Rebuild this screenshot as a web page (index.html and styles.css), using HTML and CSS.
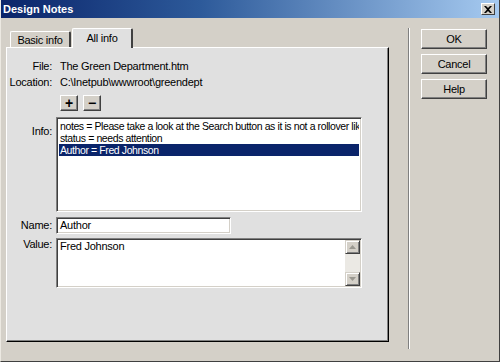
FILE: index.html
```html
<!DOCTYPE html>
<html lang="en">
<head>
  <meta charset="UTF-8">
  <title>Design Notes</title>
  <link rel="stylesheet" href="styles.css">
</head>
<body>
  <div class="window">
    <div class="titlebar">
      <span class="title">Design Notes</span>
      <span class="close-btn">
        <svg width="8" height="7" viewBox="0 0 8 7"><path d="M0 0h2l2 2 2-2h2L5 3.5 8 7H6L4 5 2 7H0l3-3.5z" fill="#000"/></svg>
      </span>
    </div>
    <div class="main">
      <div class="left">
        <div class="tabs">
          <div class="tab">Basic info</div>
          <div class="tab active">All info</div>
        </div>
        <div class="panel">
          <div class="form">
            <div class="label">File:</div>
            <div class="value">The Green Department.htm</div>

            <div class="label">Location:</div>
            <div class="value">C:\Inetpub\wwwroot\greendept</div>

            <div></div>
            <div class="tools">
              <span class="tool-btn">+</span>
              <span class="tool-btn">&minus;</span>
            </div>

            <div class="label label-info">Info:</div>
            <div class="listbox">
              <div class="item">notes = Please take a look at the Search button as it is not a rollover like the others</div>
              <div class="item">status = needs attention</div>
              <div class="item selected">Author = Fred Johnson</div>
            </div>

            <div class="label label-name">Name:</div>
            <div class="textbox">Author</div>

            <div class="label label-value">Value:</div>
            <div class="textarea">
              <div class="textarea-text">Fred Johnson</div>
              <div class="scrollbar">
                <span class="arrow">
                  <svg width="7" height="4" viewBox="0 0 7 4"><path d="M3.5 0L7 4H0z" fill="#9a9890"/></svg>
                </span>
                <span class="track"></span>
                <span class="arrow">
                  <svg width="7" height="4" viewBox="0 0 7 4"><path d="M0 0h7L3.5 4z" fill="#9a9890"/></svg>
                </span>
              </div>
            </div>
          </div>
        </div>
      </div>
      <div class="separator"></div>
      <div class="buttons">
        <div class="btn">OK</div>
        <div class="btn">Cancel</div>
        <div class="btn">Help</div>
      </div>
    </div>
  </div>
</body>
</html>
```

FILE: styles.css
```css
* {
  margin: 0;
  padding: 0;
  box-sizing: border-box;
}
body {
  width: 500px;
  height: 362px;
  overflow: hidden;
  background: #d4d0c8;
  font-family: 'Liberation Sans', Arial, sans-serif;
  font-size: 11px;
  letter-spacing: -0.25px;
  color: #000;
}
.window {
  width: 500px;
  height: 362px;
  background: #d4d0c8;
  border-right: 1px solid #404040;
  border-bottom: 1px solid #404040;
  border-left: 1px solid #ece9e2;
}
.titlebar {
  height: 18px;
  background: linear-gradient(90deg, #0a246a 0%, #2d5a9a 40%, #a6caf0 100%);
  display: flex;
  align-items: center;
  justify-content: space-between;
  padding: 0 4px 0 2px;
}
.title {
  color: #fff;
  font-weight: bold;
  font-size: 11px;
  letter-spacing: 0;
}
.close-btn {
  width: 14px;
  height: 12px;
  background: #d4d0c8;
  border: 1px solid;
  border-color: #fff #404040 #404040 #fff;
  display: flex;
  align-items: center;
  justify-content: center;
}

.main {
  display: flex;
}
.left {
  padding: 10px 0 0 5px;
}
.tabs {
  display: flex;
  align-items: flex-end;
  height: 19px;
  padding-left: 4px;
}
.tab {
  height: 16px;
  width: 61px;
  background: #d4d0c8;
  border: 1px solid #fff;
  border-right: 2px solid #404040;
  border-bottom: none;
  border-radius: 2px 2px 0 0;
  text-align: center;
  line-height: 16px;
}
.tab.active {
  height: 20px;
  width: 61px;
  margin-left: 1px;
  margin-bottom: -1px;
  background: #e0e0e0;
  line-height: 19px;
  position: relative;
  z-index: 1;
}
.panel {
  width: 383px;
  height: 295px;
  background: #e0e0e0;
  border: 1px solid;
  border-color: #fff #000 #000 #fff;
  box-shadow: inset -1px -1px #808080;
  padding: 10px 26px 0 0;
}
.form {
  display: grid;
  grid-template-columns: 45px 1fr;
  column-gap: 4px;
}
.label {
  text-align: right;
  line-height: 16px;
  white-space: nowrap;
}
.value {
  padding-left: 4px;
  line-height: 16px;
  white-space: nowrap;
}
.tools {
  display: flex;
  gap: 5px;
  margin-top: 5px;
  padding-left: 4px;
}
.tool-btn {
  width: 18px;
  height: 16px;
  background: #d4d0c8;
  border: 1px solid;
  border-color: #fff #404040 #404040 #fff;
  box-shadow: inset -1px -1px #808080;
  display: flex;
  align-items: center;
  justify-content: center;
  font-weight: bold;
  font-size: 14px;
  line-height: 1;
}
.label-info {
  margin-top: 6px;
  padding-top: 6px;
}
.listbox {
  margin-top: 6px;
  height: 95px;
  background: #fff;
  border: 1px solid;
  border-color: #808080 #fff #fff #808080;
  box-shadow: inset 1px 1px #404040, inset -1px -1px #d4d0c8;
  padding: 2px 2px;
  overflow: hidden;
  font-size: 10.5px;
  letter-spacing: -0.4px;
}
.item {
  height: 12px;
  line-height: 12px;
  padding-left: 1px;
  white-space: nowrap;
  overflow: hidden;
}
.item.selected {
  background: #0a246a;
  color: #fff;
}
.label-name {
  margin-top: 5px;
  line-height: 17px;
}
.textbox {
  margin-top: 5px;
  width: 175px;
  height: 17px;
  line-height: 13px;
  background: #fff;
  border: 1px solid;
  border-color: #808080 #fff #fff #808080;
  box-shadow: inset 1px 1px #404040, inset -1px -1px #d4d0c8;
  padding: 1px 3px;
}
.label-value {
  margin-top: 4px;
  line-height: 12px;
}
.textarea {
  margin-top: 4px;
  height: 50px;
  background: #fff;
  border: 1px solid;
  border-color: #808080 #fff #fff #808080;
  box-shadow: inset 1px 1px #404040, inset -1px -1px #d4d0c8;
  padding: 1px 2px 2px 3px;
  display: flex;
}
.textarea-text {
  flex: 1;
  line-height: 12px;
}
.scrollbar {
  width: 15px;
  display: flex;
  flex-direction: column;
  margin: 0 -1px -1px 0;
}
.arrow {
  height: 14px;
  background: #d4d0c8;
  border: 1px solid;
  border-color: #d4d0c8 #404040 #404040 #d4d0c8;
  box-shadow: inset 1px 1px #fff, inset -1px -1px #808080;
  display: flex;
  align-items: center;
  justify-content: center;
}
.track {
  flex: 1;
  background: #ebe9e4;
}

.separator {
  width: 2px;
  height: 321px;
  margin: 10px 0 0 19px;
  border-left: 1px solid #808080;
  border-right: 1px solid #fff;
}
.buttons {
  display: flex;
  flex-direction: column;
  gap: 5px;
  padding: 11px 0 0 11px;
}
.btn {
  width: 66px;
  height: 20px;
  background: #d4d0c8;
  border: 1px solid;
  border-color: #fff #404040 #404040 #fff;
  box-shadow: inset -1px -1px #808080;
  text-align: center;
  line-height: 18px;
}
```
